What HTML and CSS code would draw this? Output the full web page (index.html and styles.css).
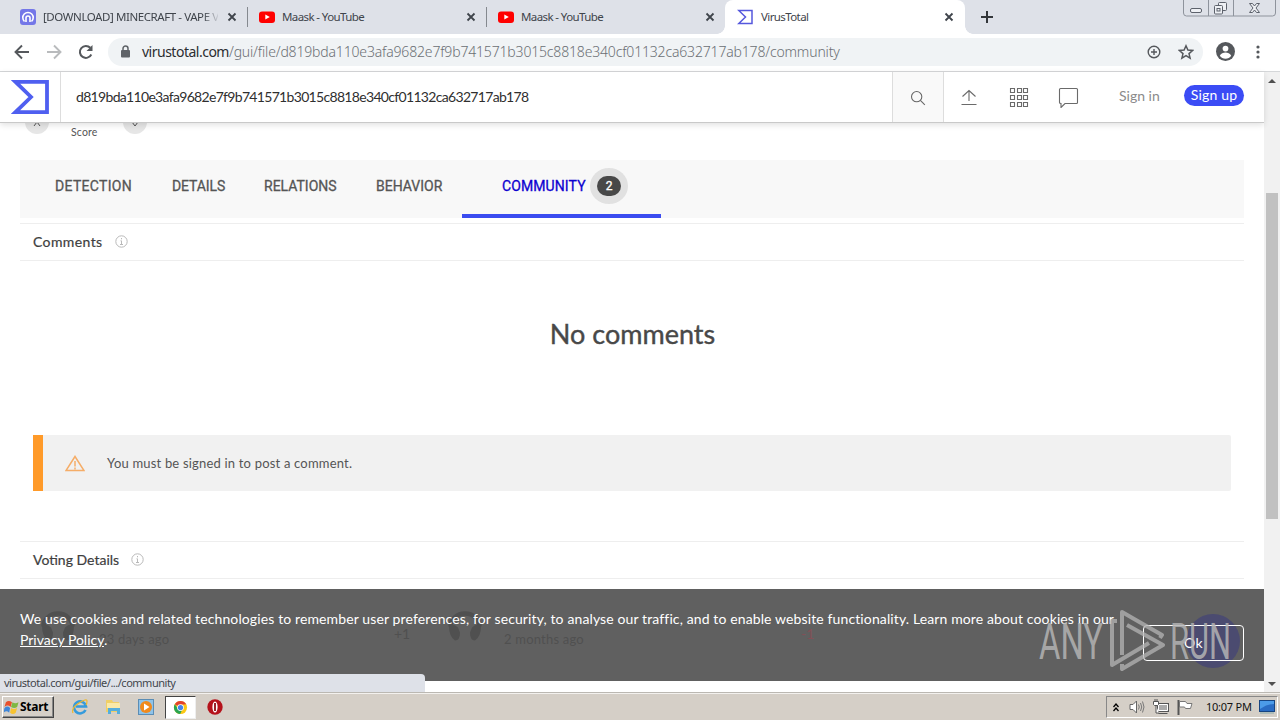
FILE: index.html
```html
<!DOCTYPE html>
<html lang="en">
<head>
<meta charset="utf-8">
<title>VirusTotal</title>
<link rel="stylesheet" href="styles.css">
</head>
<body>
<div class="tabstrip">
  <div class="tab">
    <svg class="favicon" viewBox="0 0 16 16"><rect width="16" height="16" rx="3" fill="#7477e8"/><path d="M4.500 12.500A5.200 5.200 0 1 1 11.500 12.500" fill="none" stroke="#fff" stroke-width="1.600"/><path d="M6 13V9a2 2 0 0 1 4 0v4" fill="none" stroke="#fff" stroke-width="1.600"/></svg>
    <span class="tab-title t-download">[DOWNLOAD] MINECRAFT - VAPE V4</span>
    <svg class="close" viewBox="0 0 10 10"><path d="M1.500 1.500l7 7M8.500 1.500l-7 7"/></svg>
  </div>
  <div class="tab sep">
    <svg class="favicon" viewBox="0 0 16 16"><rect y="2.500" width="16" height="11.500" rx="3" fill="#f00"/><path d="M6.300 5.500v5l4.500-2.500z" fill="#fff"/></svg>
    <span class="tab-title t-maask">Maask - YouTube</span>
    <svg class="close" viewBox="0 0 10 10"><path d="M1.500 1.500l7 7M8.500 1.500l-7 7"/></svg>
  </div>
  <div class="tab sep">
    <svg class="favicon" viewBox="0 0 16 16"><rect y="2.500" width="16" height="11.500" rx="3" fill="#f00"/><path d="M6.300 5.500v5l4.500-2.500z" fill="#fff"/></svg>
    <span class="tab-title t-maask">Maask - YouTube</span>
    <svg class="close" viewBox="0 0 10 10"><path d="M1.500 1.500l7 7M8.500 1.500l-7 7"/></svg>
  </div>
  <div class="tab active">
    <svg class="favicon" viewBox="0 0 16 16"><path d="M1.800 1.500H15v13H1.800L8.500 8z" fill="none" stroke="#5558dd" stroke-width="1.500"/></svg>
    <span class="tab-title t-vt">VirusTotal</span>
    <svg class="close" viewBox="0 0 10 10"><path d="M1.500 1.500l7 7M8.500 1.500l-7 7"/></svg>
  </div>
  <svg class="newtab" viewBox="0 0 12 12"><path d="M6 0v12M0 6h12" stroke="#33363a" stroke-width="2"/></svg>
  <svg class="winbtns" viewBox="0 0 94 18"><path d="M.5 0v13a3 3 0 0 0 3 3h86a3 3 0 0 0 3-3V0M25.500 0v16M50.500 0v16" fill="none" stroke="#8e939c"/><g fill="#eef0f4" stroke="#5d626c"><rect x="7.500" y="8.500" width="11" height="4" rx="1.500"/><rect x="35.500" y="2.500" width="8" height="8" rx="1"/><rect x="31.500" y="5.500" width="8" height="8.500" rx="1"/><rect x="34" y="8.500" width="3" height="2.500"/><path d="M66.500 3.500h3l2 2.500 2-2.500h3l-3.500 4.500 3.500 4.500h-3l-2-2.500-2 2.500h-3l3.500-4.500z"/></g></svg>
</div>
<div class="toolbar">
  <svg class="nav" viewBox="0 0 16 16"><path d="M15 8H2M8 1.500L1.500 8 8 14.500" fill="none" stroke="#55585c" stroke-width="1.900"/></svg>
  <svg class="nav" viewBox="0 0 16 16"><path d="M1 8h13M8 1.500L14.500 8 8 14.500" fill="none" stroke="#b9bbbd" stroke-width="1.900"/></svg>
  <svg class="nav" viewBox="0 0 16 16"><path d="M13.300 10.500A6 6 0 1 1 12.300 3.800" fill="none" stroke="#55585c" stroke-width="2"/><path d="M14.500 1v6h-6z" fill="#55585c"/></svg>
  <div class="omnibox">
    <svg class="lock" viewBox="0 0 10 13"><rect y="5" width="9" height="7.500" rx="1" fill="#5f6368"/><path d="M2 6V3.500a2.500 2.500 0 0 1 5 0V6" fill="none" stroke="#5f6368" stroke-width="1.500"/></svg>
    <span class="url"><span class="domain">virustotal.com</span><span class="path">/gui/file/d819bda110e3afa9682e7f9b741571b3015c8818e340cf01132ca632717ab178/community</span></span>
    <svg class="plus" viewBox="0 0 14 14"><circle cx="7" cy="7" r="5.800"/><path d="M7 4v6M4 7h6"/></svg>
    <svg class="star" viewBox="0 0 16 16"><path d="M8 1.800l1.900 4.300 4.700.4-3.600 3.100 1.100 4.600L8 11.700l-4.100 2.500L5 9.600 1.400 6.500l4.700-.4z"/></svg>
  </div>
  <svg class="avatar" viewBox="0 0 18 18"><circle cx="9" cy="9" r="9" fill="#55585c"/><circle cx="9" cy="6.200" r="2.700" fill="#fff"/><path d="M3.600 13c1-2.100 3.400-3 5.400-3s4.400.9 5.400 3a6.500 6.500 0 0 1-10.800 0z" fill="#fff"/></svg>
  <svg class="kebab" viewBox="0 0 4 14"><g fill="#55585c"><circle cx="2" cy="2" r="1.600"/><circle cx="2" cy="7" r="1.600"/><circle cx="2" cy="12" r="1.600"/></g></svg>
</div>
<div class="viewport">
  <main class="page">
    <header class="header">
      <div class="logo"><svg viewBox="0 0 38 34"><path d="M4.500 1.900H36v30.200H4.500L20 17z" fill="none" stroke="#4f5ff0" stroke-width="3.800"/></svg></div>
      <div class="query">d819bda110e3afa9682e7f9b741571b3015c8818e340cf01132ca632717ab178</div>
      <div class="search"><svg viewBox="0 0 18 18"><circle cx="7.500" cy="7.500" r="5.800"/><path d="M11.700 11.700l5 5"/></svg></div>
      <svg class="hicon" viewBox="0 0 22 22"><path d="M3.500 18.500h15M11 15V5M4.500 10.500L11 4.500l6.500 6"/></svg>
      <svg class="hicon" viewBox="0 0 22 22"><path d="M2.500 2.500h4v4h-4zM9.500 2.500h4v4h-4zM15.500 2.500h4v4h-4zM2.500 9.500h4v4h-4zM9.500 9.500h4v4h-4zM15.500 9.500h4v4h-4zM2.500 16.500h4v4h-4zM9.500 16.500h4v4h-4zM15.500 16.500h4v4h-4z"/></svg>
      <svg class="hicon" viewBox="0 0 22 22"><path d="M2.500 2.500h16q1 0 1 1v13q0 1-1 1H7l-4 4v-4q-1.500 0-1.500-1v-13q0-1 1-1z"/></svg>
      <span class="signin">Sign in</span>
      <span class="signup">Sign up</span>
    </header>
    <div class="score">
      <span class="round"><svg viewBox="0 0 8 8"><path d="M1 6l3-4 3 4"/></svg></span>
      <span class="score-label">Score</span>
      <span class="round"><svg viewBox="0 0 8 8"><path d="M1 2l3 4 3-4"/></svg></span>
    </div>
    <nav class="tabs">
      <span class="det">DETECTION</span><span class="dls">DETAILS</span><span class="rel">RELATIONS</span><span class="beh">BEHAVIOR</span>
      <div class="community"><span class="com">COMMUNITY</span><span class="halo"><span class="count">2</span></span></div>
    </nav>
    <section class="section first"><span class="s-com">Comments</span><svg class="info" viewBox="0 0 13 13"><circle cx="6.500" cy="6.500" r="5.700"/><path d="M6.500 3v1.300M5.500 5.800h1v3.500M5 9.500h3"/></svg></section>
    <h1 class="empty"><span>No comments</span></h1>
    <div class="alert">
      <svg viewBox="0 0 20 17"><path d="M10 1.500L19 15.500H1z"/><path d="M10 6v5.500M10 12.500v2"/></svg>
      <span>You must be signed in to post a comment.</span>
    </div>
    <section class="section"><span class="s-vot">Voting Details</span><svg class="info" viewBox="0 0 13 13"><circle cx="6.500" cy="6.500" r="5.700"/><path d="M6.500 3v1.300M5.500 5.800h1v3.500M5 9.500h3"/></svg></section>
    <div class="cookies">
      <div class="votes">
        <svg class="face" viewBox="0 0 34 32"><path d="M2.500 16a14.500 13 0 0 1 29 0" fill="none" stroke="#505050" stroke-width="4.500"/><path d="M1 15q4-3 9 2l2 5q0 8-5 8Q1 26 1 15zM33 15q-4-3-9 2l-2 5q0 8 5 8 6-4 6-15z" fill="#505050"/></svg>
        <span class="ago a1">23 days ago</span><span class="pts">+1</span>
        <svg class="face" viewBox="0 0 34 32"><path d="M2.500 16a14.500 13 0 0 1 29 0" fill="none" stroke="#505050" stroke-width="4.500"/><path d="M1 15q4-3 9 2l2 5q0 8-5 8Q1 26 1 15zM33 15q-4-3-9 2l-2 5q0 8 5 8 6-4 6-15z" fill="#505050"/></svg>
        <span class="ago a2">2 months ago</span><span class="pts neg">-1</span>
      </div>
      <div class="bubble"></div>
      <p class="notice"><span class="line1">We use cookies and related technologies to remember user preferences, for security, to analyse our traffic, and to enable website functionality. Learn more about cookies in our</span><br><span class="line2"><u>Privacy Policy</u>.</span></p>
      <div class="ok">Ok</div>
      <svg class="watermark" viewBox="0 0 194 62"><g fill="none" stroke="#b4b4b4" stroke-opacity=".75" stroke-width="4" stroke-linejoin="round"><path d="M78 12h-5v44l37-22M83 46V3l40 23-2 3M88 16l36 20-41 24v-5"/></g><g fill="#b4b4b4" fill-opacity=".85" font-family="Roboto, sans-serif" font-size="50"><text x="0" y="50" textLength="64" lengthAdjust="spacingAndGlyphs">ANY</text><text x="131" y="50" textLength="61" lengthAdjust="spacingAndGlyphs">RUN</text></g></svg>
    </div>
    <div class="status"><span>virustotal.com/gui/file/.../community</span></div>
  </main>
  <aside class="scroll"><span class="up"></span><span class="thumb"></span><span class="down"></span></aside>
</div>
<footer class="taskbar">
  <div class="start"><svg viewBox="0 0 16 16"><path d="M2 3q3-3 6.500 0L7 8Q4 5 .5 8z" fill="#e8502c"/><path d="M9 3q3 2 6.500 0L14 8q-3 2-6.500 0z" fill="#7fb842"/><path d="M.5 9q3-3 6 0l-1 5q-3-3-6 0z" fill="#3f86d8"/><path d="M7.500 9q3 2 6.500 0l-1.500 5q-3 3-6 0z" fill="#f7c331"/></svg><span>Start</span></div>
  <svg class="app" viewBox="0 0 16 16"><path d="M13.500 11A6 6 0 1 1 14 7.500H4" fill="none" stroke="#359bdc" stroke-width="2.600"/><path d="M1 14Q-1 9 7 4t8-2-1 4" fill="none" stroke="#edb82e" stroke-width="1.200"/></svg>
  <svg class="app" viewBox="0 0 16 16"><path d="M1 1h6l1 2h6v10H1z" fill="#efcf67"/><path d="M2 4h13v5H2z" fill="#f9e9a8"/><path d="M3 9h12v6h-3v-3H6v3H3z" fill="#55aedc"/></svg>
  <svg class="app" viewBox="0 0 16 16"><rect x=".5" y=".5" width="15" height="15" fill="#8ec3e9" stroke="#5b8db5"/><circle cx="8" cy="8" r="6" fill="#f08a1c"/><path d="M6 4.500v7L11.500 8z" fill="#fff"/></svg>
  <div class="app-active"><svg viewBox="0 0 16 16"><circle cx="8" cy="8" r="7" fill="#fbc816"/><path d="M8 8L1.900 4.600A7 7 0 0 1 14.100 4.600L8 5z" fill="#e2412e"/><path d="M1.900 4.500A7 7 0 0 0 7.600 15L10 10 5 9z" fill="#29a552"/><circle cx="8" cy="8" r="3.600" fill="#fff"/><circle cx="8" cy="8" r="2.800" fill="#4384ea"/></svg></div>
  <svg class="app opera" viewBox="0 0 16 16"><circle cx="8" cy="8" r="7.700" fill="#b5121b"/><ellipse cx="8" cy="8" rx="2.600" ry="5.500" fill="#fff"/><path d="M8 4v8" stroke="#8f0d14" stroke-width="1.800"/></svg>
  <div class="tray">
    <svg class="chev" viewBox="0 0 6 9"><path d="M.5 4L3 1l2.500 3M.5 8L3 5l2.500 3" fill="none" stroke="#000" stroke-width="1.300"/></svg>
    <svg class="tic" viewBox="0 0 16 16"><path d="M1 5.500h3L7.500 2v12L4 10.500H1z" fill="#fff" stroke="#666"/><path d="M9.500 5.500q1.500 2.500 0 5M11.500 4q2.500 4 0 8M13.500 2.500q3 5.500 0 11" fill="none" stroke="#777"/></svg>
    <svg class="tic" viewBox="0 0 16 16"><rect x="4.500" y="4.500" width="11" height="8" fill="#aaa" stroke="#555"/><path d="M5.500 5.500h9v6h-9z" fill="none" stroke="#fff"/><path d="M5.500 14.500h9" stroke="#555"/><path d="M.5 2.500h5v3l-1 1h-3l-1-1zM2 0v2M4 0v2M3 6.500V14h3" fill="#fff" stroke="#555"/></svg>
    <svg class="tic" viewBox="0 0 16 16"><path d="M1.500 1v15" stroke="#555" stroke-width="2"/><path d="M2.500 2.500h6l1.500 2h5l-1.500 5h-5l-1-1.500h-5z" fill="#fff" stroke="#777"/></svg>
    <span class="clock">10:07 PM</span>
    <svg class="desk" viewBox="0 0 16 14"><rect x=".5" y=".5" width="15" height="11" fill="#2a6cc4" stroke="#174582"/><path d="M1 1h14v3Q8 4 1 9z" fill="#4c9be8"/><path d="M1 13h14" stroke="#8aa" /></svg>
  </div>
</footer>
</body>
</html>
```
FILE: styles.css
```css
* { box-sizing: border-box; }
body { margin: 0; width: 1280px; height: 720px; overflow: hidden; display: flex; flex-direction: column; font-family: Lato, sans-serif; background: #fff; }
svg { display: block; flex: none; }
span { white-space: nowrap; }
.tabstrip { height: 34px; background: #dee1e8; display: flex; position: relative; flex: none; }
.tab { width: 239px; padding: 0 10px 0 12px; display: flex; align-items: center; position: relative; color: #3f444b; }
.tab:first-child { width: 247px; padding-left: 20px; }
.tab.sep::before { content: ""; width: 1px; height: 20px; background: #85898f; position: absolute; left: 0; top: 7px; }
.tab.active { background: #fff; border-radius: 8px 8px 0 0; width: 240px; padding-right: 11px; }
.tab.active::before, .tab.active::after { content: ""; position: absolute; bottom: 0; width: 8px; height: 8px; }
.tab.active::before { left: -8px; background: radial-gradient(circle at 0 0, transparent 7.5px, #fff 8px); }
.tab.active::after { right: -8px; background: radial-gradient(circle at 100% 0, transparent 7.5px, #fff 8px); }
.favicon { width: 16px; height: 16px; margin-right: 7px; }
.tab-title { flex: 1; overflow: hidden; font: 11.5px/18px "Noto Sans", sans-serif; letter-spacing: -.35px; padding-bottom: 1px; }
.t-maask { letter-spacing: -.6px; }
.t-vt { letter-spacing: -.6px; padding-left: 1px; }
.t-download { letter-spacing: -.42px; -webkit-mask-image: linear-gradient(90deg, #000 160px, transparent 177px); margin-right: 9px; }
.close { width: 10px; height: 10px; stroke: #3f444b; stroke-width: 1.8; }
.newtab { width: 12px; height: 12px; margin: 11px 0 0 16px; }
.winbtns { width: 94px; height: 18px; margin-left: auto; margin-right: 3px; }
.toolbar { height: 38px; flex: none; display: flex; align-items: center; padding: 0 0 2px 14px; border-bottom: 1px solid #d5d7d9; }
.nav { width: 16px; height: 16px; margin-right: 16px; }
.omnibox { height: 28px; width: 1095px; margin-left: -2px; border-radius: 14px; background: #f0f3f5; display: flex; align-items: center; padding-left: 13px; }
.lock { width: 10px; height: 13px; margin-right: 11px; }
.url { font: 14px/28px "Noto Sans", sans-serif; color: #6b6f74; flex: 1; }
.domain { color: #2b2d30; letter-spacing: -.5px; }
.path { letter-spacing: -.17px; font-weight: 300; }
.plus { width: 14px; height: 14px; margin-right: 17px; fill: none; stroke: #55585c; stroke-width: 1.4; }
.star { width: 16px; height: 16px; margin-right: 9px; fill: none; stroke: #55585c; stroke-width: 1.5; }
.avatar { width: 19px; height: 19px; margin-left: 13px; }
.kebab { width: 4px; height: 14px; margin-left: 21px; }
.viewport { height: 620px; flex: none; display: flex; }
.page { width: 1264px; height: 620px; position: relative; }
.header { height: 51px; border-bottom: 1px solid #c9c9c9; box-shadow: 0 2px 6px rgba(0,0,0,.12); display: flex; align-items: center; position: relative; background: #fff; z-index: 1; }
.logo { width: 61px; height: 50px; border-right: 1px solid #ddd; padding: 8px 0 0 11px; }
.logo svg { width: 38px; height: 34px; }
.query { flex: 1; padding: 0 0 1px 15px; font-size: 14px; letter-spacing: -.68px; color: #2f2f2f; }
.search { width: 52px; height: 50px; border: solid #ddd; border-width: 0 1px; background: #f9f9f9; padding: 18px 0 0 17px; }
.search svg { width: 16px; height: 16px; fill: none; stroke: #666; stroke-width: 1.2; }
.hicon { width: 22px; height: 22px; margin-left: 14px; margin-right: 14px; fill: none; stroke: #6a6a6a; stroke-width: 1.1; }
.signin { width: 65px; margin-left: 25px; font-size: 14px; color: #8b8b8b; letter-spacing: 0; padding-bottom: 4px; }
.signup { width: 60px; height: 21px; margin: 0 20px 3px 0; background: #3b4cf5; border-radius: 11px; color: #fff; font-size: 14px; line-height: 20px; text-align: center; letter-spacing: .15px; }
.score { height: 37px; display: flex; padding-left: 25px; }
.round { width: 24px; height: 24px; margin-top: -13px; border-radius: 50%; background: #e6e6e6; display: flex; align-items: flex-end; justify-content: center; padding-bottom: 6px; }
.round svg { width: 8px; height: 8px; fill: none; stroke: #555; }
.score-label { width: 74px; padding: 3px 0 0 22px; font-size: 10.500px; color: #555; letter-spacing: .15px; }
.tabs { height: 58px; margin: 0 20px; background: #f8f8f8; display: flex; font: 400 14px/53px Roboto, sans-serif; -webkit-text-stroke: .3px; color: #555; padding-left: 35px; }
.det { width: 117px; letter-spacing: .3px; }
.dls { width: 92px; letter-spacing: -.1px; }
.rel { width: 112px; letter-spacing: 0; }
.beh { width: 86px; }
.community { width: 199px; height: 58px; border-bottom: 4px solid #3b4cf0; padding-left: 40px; color: #0c00d0; display: flex; }
.com { width: 88px; letter-spacing: .1px; }
.halo { width: 38px; height: 36px; margin-top: 8px; border-radius: 50%; background: #e1e1e1; display: flex; align-items: center; justify-content: center; }
.count { width: 24px; height: 20px; border-radius: 10px; background: #484848; color: #fff; font-size: 12px; line-height: 20px; text-align: center; }
.section { height: 38px; margin: 50px 20px 0; padding: 0 0 1px 13px; border: solid #eee; border-width: 1px 0; display: flex; align-items: center; font-size: 14px; line-height: 17px; color: #3e3e3e; -webkit-text-stroke: .2px; }
.section span { padding-bottom: 1px; }
.s-com { letter-spacing: .4px; }
.section.first { margin-top: 5px; }
.info { width: 13px; height: 13px; margin-left: 12px; fill: none; stroke: #b9b9b9; stroke-width: 1; }
.empty { height: 174px; margin: 0; padding: 56px 0 0 1px; text-align: center; font: 400 27px/34px Lato, sans-serif; color: #484848; -webkit-text-stroke: .4px; }
.alert { height: 56px; margin: 0 33px; border-left: 10px solid #ff9a29; border-radius: 0 2px 2px 0; background: #f1f1f1; display: flex; align-items: center; padding-left: 22px; font-size: 13px; letter-spacing: .19px; color: #555; }
.alert svg { width: 20px; height: 17px; margin-right: 22px; fill: none; stroke: #f5ad68; stroke-width: 1.500; }
.cookies { height: 92px; width: 1264px; background: #606060; position: absolute; top: 517px; left: 0; }
.votes { display: flex; padding: 20px 0 0 41px; font-size: 13px; color: #505050; }
.face { width: 34px; height: 35px; }
.ago { padding: 22px 0 0 24px; width: 319px; letter-spacing: .2px; }
.a2 { width: 319px; padding-left: 22px; }
.pts { width: 54px; padding-top: 16px; font-size: 14px; }
.neg { color: #825057; }
.bubble { position: absolute; left: 1186px; top: 25px; width: 54px; height: 54px; border-radius: 50%; background: #4b4b70; }
.notice { position: absolute; left: 20px; top: 19px; margin: 0; color: #fff; font-size: 14px; line-height: 21px; letter-spacing: .12px; }
.line2 { letter-spacing: 0; }
.ok { position: absolute; left: 1143px; top: 36px; width: 101px; height: 36px; border: 1px solid #fff; border-radius: 4px; color: #fff; text-align: center; font-size: 14px; line-height: 33px; letter-spacing: .5px; }
.watermark { position: absolute; left: 1039px; top: 20px; width: 194px; height: 62px; }
.status { position: absolute; left: 0; bottom: 0; width: 425px; height: 18px; background: #dee1e8; border-radius: 0 4px 0 0; padding-left: 4px; font: 11px/18px "Noto Sans", sans-serif; letter-spacing: -.49px; color: #42464c; }
.scroll { width: 16px; background: #f1f1f1; position: relative; display: flex; flex-direction: column; align-items: center; }
.up { border: 4px solid transparent; border-top: 0; border-bottom-color: #505050; margin-top: 7px; }
.thumb { width: 12px; height: 326px; background: #c1c1c1; margin-top: 110px; }
.down { border: 4px solid transparent; border-bottom: 0; border-top-color: #505050; margin-top: auto; margin-bottom: 6px; }
.taskbar { height: 28px; background: #d5cfc7; border-top: 1px solid #bbb8b2; box-shadow: inset 0 1px #f3f1ee; display: flex; align-items: center; padding: 1px 2px 0 2px; }
.start { width: 52px; height: 22px; border: 1px solid; border-color: #fff #444 #444 #fff; box-shadow: inset -1px -1px #888; display: flex; align-items: center; padding-left: 1px; font: bold 12px/18px "Noto Sans", sans-serif; letter-spacing: -.25px; margin-right: 18px; }
.start span { padding-bottom: 1px; }
.start svg { width: 15px; height: 16px; margin-right: 1px; }
.app { width: 16px; height: 16px; margin-right: 17px; }
.app-active { flex: none; width: 31px; height: 23px; background: #fff; border: 1px solid; border-color: #444 #eee #eee #444; margin-left: -6px; margin-right: 11px; padding: 3px 7px; }
.app-active svg { width: 15px; height: 15px; }
.opera { margin: 0; }
.tray { margin-left: auto; width: 172px; height: 22px; border: 1px solid; border-color: #888 #fff #fff #888; display: flex; align-items: center; padding-left: 6px; }
.chev { width: 6px; height: 9px; margin-right: 10px; }
.tic { width: 16px; height: 16px; margin-right: 8px; }
.clock { font: 11px/16px "Noto Sans", sans-serif; letter-spacing: -.25px; color: #111; width: 50px; margin-left: 5px; margin-right: 3px; padding-bottom: 1px; }
.desk { width: 16px; height: 14px; }
```
